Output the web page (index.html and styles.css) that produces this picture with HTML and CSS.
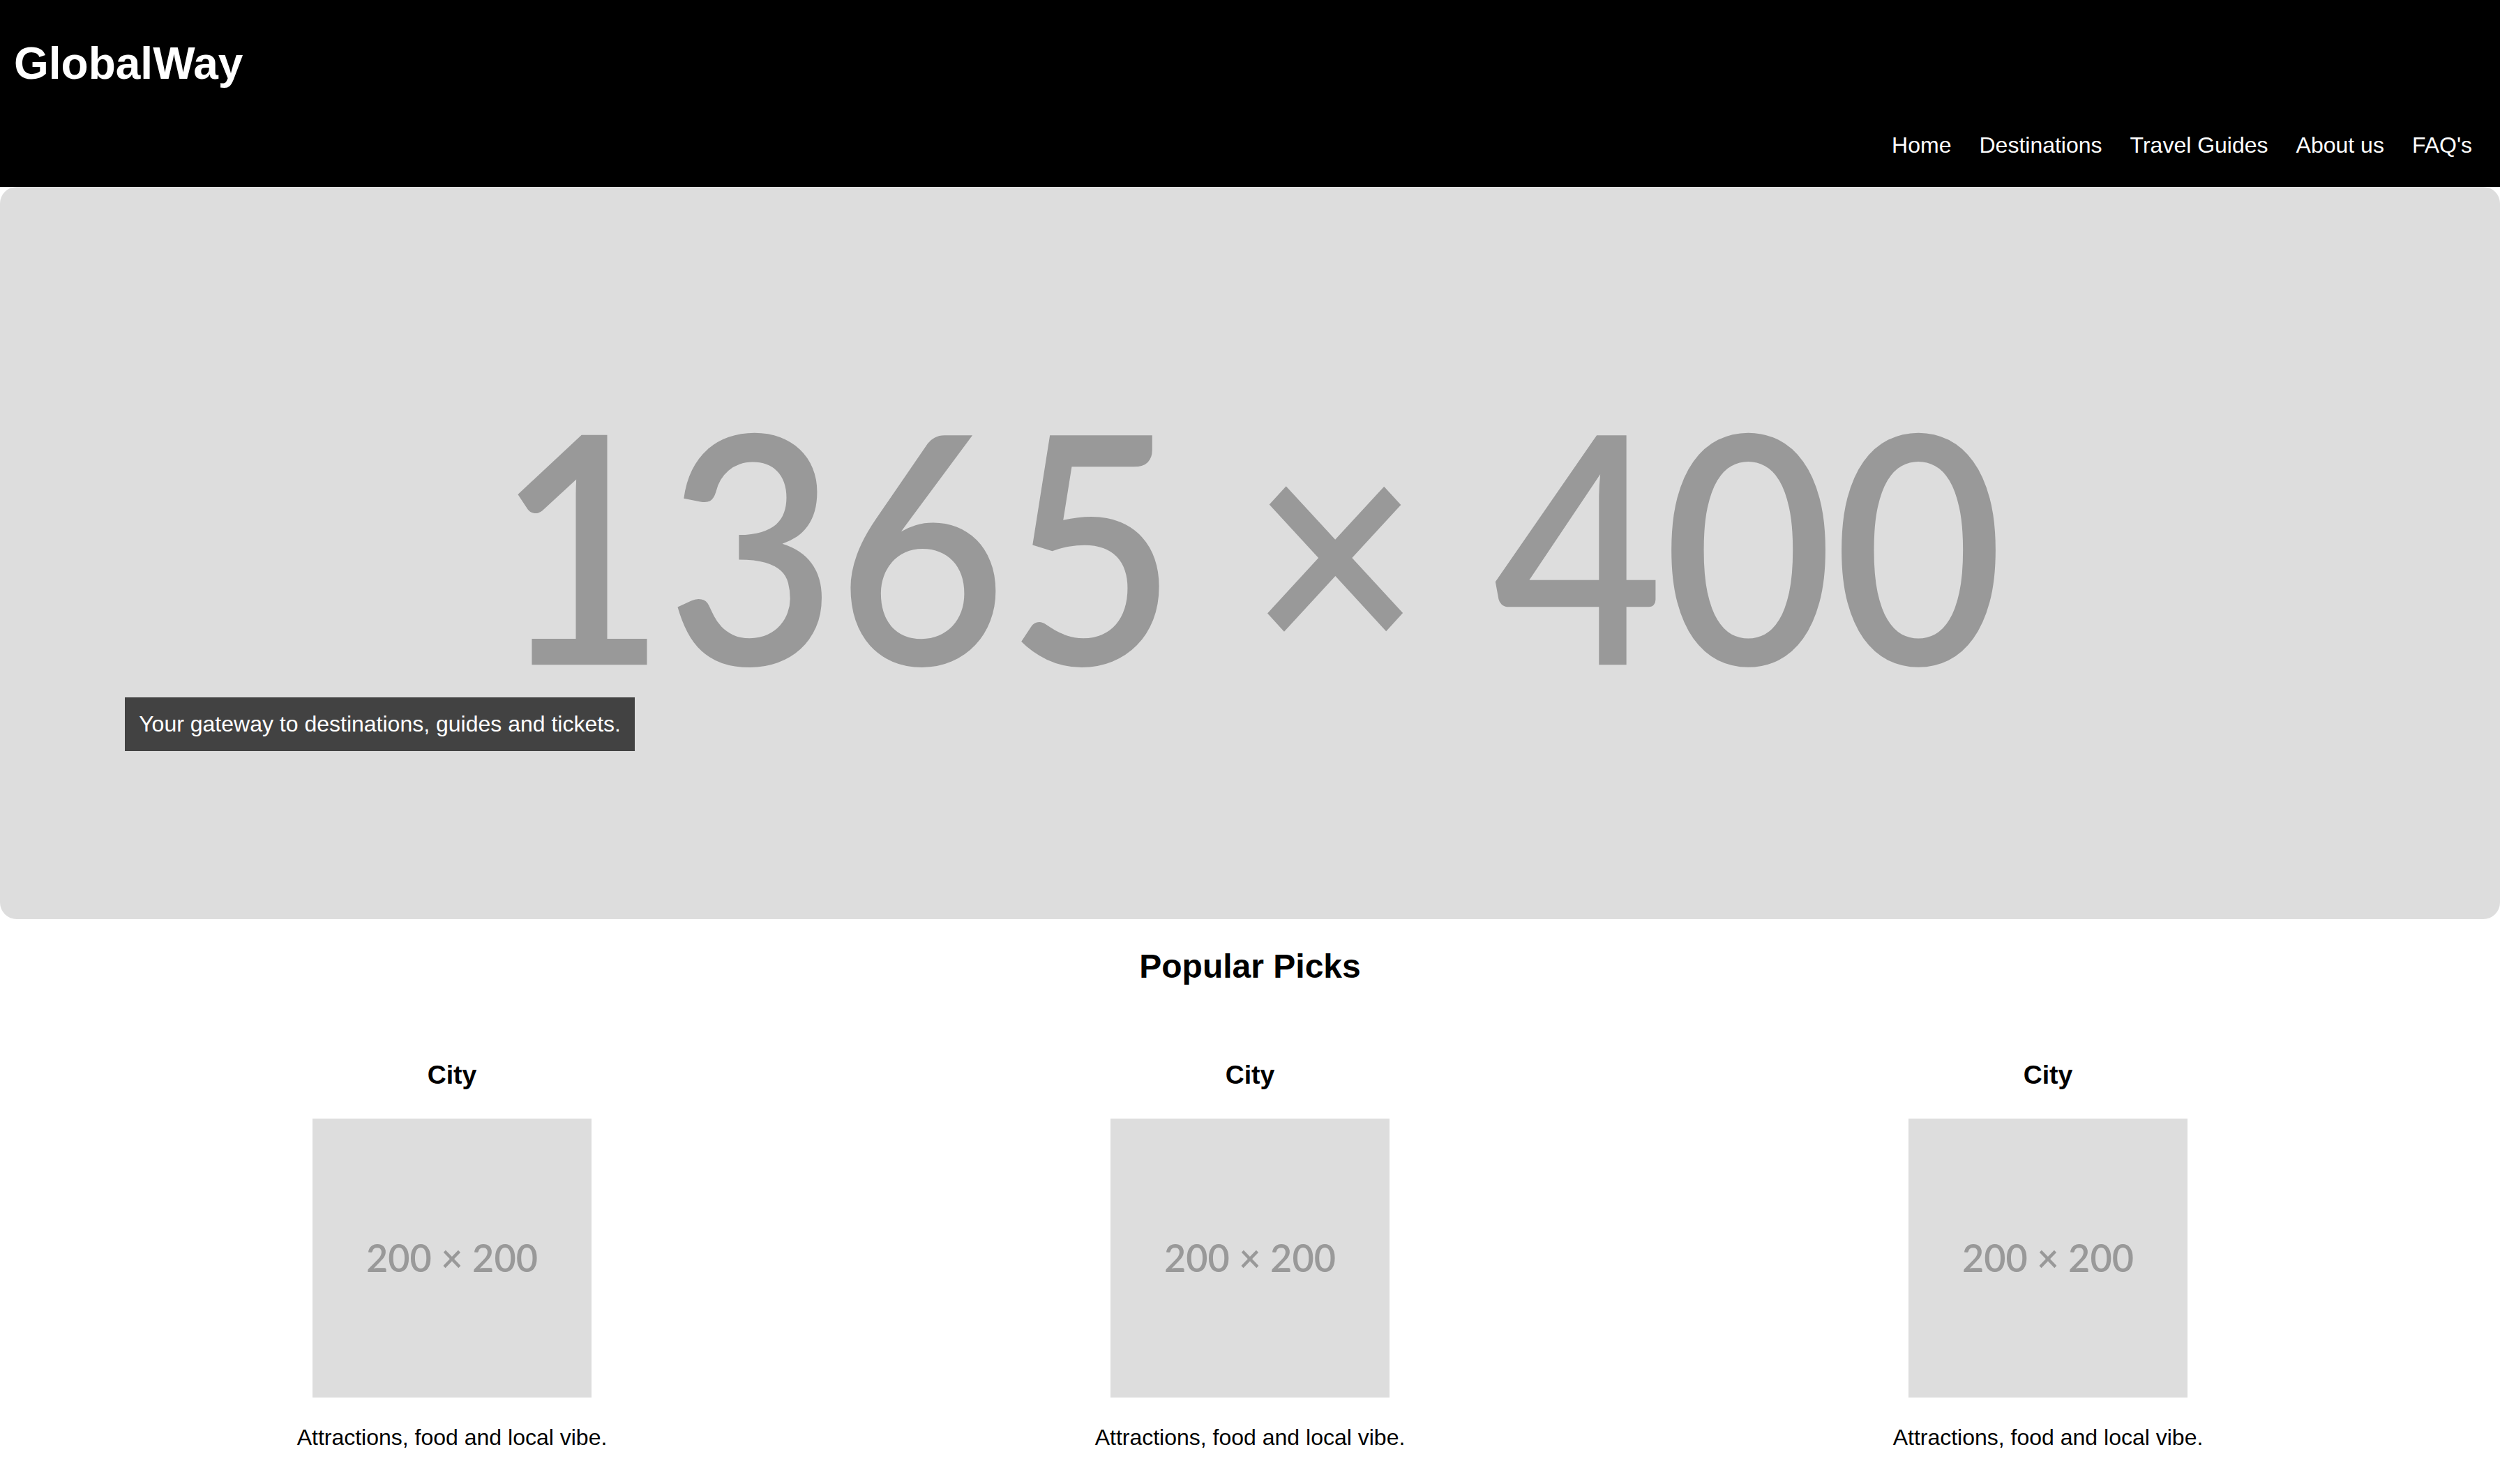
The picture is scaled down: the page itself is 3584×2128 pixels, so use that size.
FILE: index.html
```html
<!DOCTYPE html>
<html lang="en">
<head>
<meta charset="utf-8">
<title>GlobalWay</title>
<link rel="stylesheet" href="styles.css">
</head>
<body>
<header class="site-header">
  <h1 class="logo">GlobalWay</h1>
  <nav class="main-nav">
    <ul>
      <li><a href="#">Home</a></li>
      <li><a href="#">Destinations</a></li>
      <li><a href="#">Travel Guides</a></li>
      <li><a href="#">About us</a></li>
      <li><a href="#">FAQ's</a></li>
    </ul>
  </nav>
</header>

<section class="hero">
  <svg class="hero-img" viewBox="0 0 1365 400" preserveAspectRatio="none" aria-hidden="true">
    <rect class="ph-bg" width="1365" height="400"></rect>
    <text class="ph-text-lg" x="682.5" y="261" text-anchor="middle" textLength="823" lengthAdjust="spacingAndGlyphs">1365 × 400</text>
  </svg>
  <p class="hero-caption">Your gateway to destinations, guides and tickets.</p>
</section>

<main class="picks">
  <h2 class="picks-title">Popular Picks</h2>
  <div class="cards">
    <article class="card">
      <h3 class="card-title">City</h3>
      <svg class="thumb" viewBox="0 0 200 200" aria-hidden="true">
        <rect class="ph-bg" width="200" height="200"></rect>
        <text class="ph-text-sm" x="100" y="110" text-anchor="middle" textLength="123" lengthAdjust="spacingAndGlyphs">200 × 200</text>
      </svg>
      <p class="card-text">Attractions, food and local vibe.</p>
    </article>
    <article class="card">
      <h3 class="card-title">City</h3>
      <svg class="thumb" viewBox="0 0 200 200" aria-hidden="true">
        <rect class="ph-bg" width="200" height="200"></rect>
        <text class="ph-text-sm" x="100" y="110" text-anchor="middle" textLength="123" lengthAdjust="spacingAndGlyphs">200 × 200</text>
      </svg>
      <p class="card-text">Attractions, food and local vibe.</p>
    </article>
    <article class="card">
      <h3 class="card-title">City</h3>
      <svg class="thumb" viewBox="0 0 200 200" aria-hidden="true">
        <rect class="ph-bg" width="200" height="200"></rect>
        <text class="ph-text-sm" x="100" y="110" text-anchor="middle" textLength="123" lengthAdjust="spacingAndGlyphs">200 × 200</text>
      </svg>
      <p class="card-text">Attractions, food and local vibe.</p>
    </article>
  </div>
</main>
</body>
</html>
```

FILE: styles.css
```css
* {
  box-sizing: border-box;
}

html, body {
  margin: 0;
  padding: 0;
}

body {
  font-family: "Liberation Sans", Arial, Helvetica, sans-serif;
  font-size: 32px;
  color: #000;
  background: #fff;
}

/* Header */
.site-header {
  background: #000;
  color: #fff;
  display: flex;
  flex-direction: column;
  padding: 54px 40px 41px 20px;
}

.logo {
  margin: 0 0 62px;
  font-size: 64px;
  line-height: 74px;
  font-weight: 700;
}

.main-nav ul {
  list-style: none;
  margin: 0;
  padding: 0;
  display: flex;
  justify-content: flex-end;
  gap: 40px;
}

.main-nav a {
  color: #fff;
  text-decoration: none;
  font-size: 32px;
  line-height: 37px;
  display: block;
}

/* Hero */
.hero {
  position: relative;
  border-radius: 24px;
  overflow: hidden;
}

.hero-img {
  display: block;
  width: 100%;
  height: auto;
  aspect-ratio: 1365 / 400;
}

.ph-bg {
  fill: #dddddd;
}

.ph-text-lg {
  font-family: Lato, "Liberation Sans", sans-serif;
  font-size: 174px;
  font-weight: 600;
  fill: #999999;
}

.ph-text-sm {
  font-family: Lato, "Liberation Sans", sans-serif;
  font-size: 27.6px;
  font-weight: 600;
  fill: #999999;
}

.hero-caption {
  position: absolute;
  left: 5%;
  top: 732px;
  margin: 0;
  padding: 20px 20px;
  background: rgba(0, 0, 0, 0.7);
  color: #fff;
  font-size: 32px;
  line-height: 37px;
}

/* Popular picks */
.picks-title {
  margin: 40px 0 0;
  text-align: center;
  font-size: 48px;
  line-height: 55px;
  font-weight: 700;
}

.cards {
  display: grid;
  grid-template-columns: repeat(3, 1fr);
  padding: 0 76px;
  margin-top: 107px;
}

.card {
  display: flex;
  flex-direction: column;
  align-items: center;
  text-align: center;
}

.card-title {
  margin: 0 0 41px;
  font-size: 37.44px;
  line-height: 43px;
  font-weight: 700;
}

.thumb {
  display: block;
  width: 400px;
  height: 400px;
}

.card-text {
  margin: 39px 0 0;
  font-size: 32px;
  line-height: 37px;
}
```
